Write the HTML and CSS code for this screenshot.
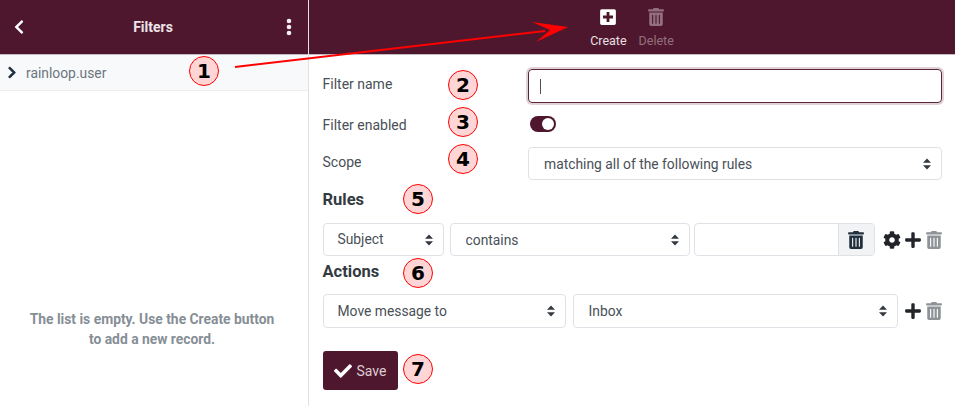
FILE: index.html
```html
<!DOCTYPE html>
<html lang="en">
<head>
<meta charset="utf-8">
<title>Filters</title>
<link rel="stylesheet" href="styles.css">
</head>
<body>
<div class="app">
  <aside class="sidebar">
    <header class="side-head">
      <svg class="back" viewBox="0 0 320 512"><path d="M34.52 239.03L228.87 44.69c9.37-9.37 24.57-9.37 33.94 0l22.67 22.67c9.36 9.36 9.37 24.52.04 33.9L131.49 256l154.02 154.75c9.34 9.38 9.32 24.54-.04 33.9l-22.67 22.67c-9.37 9.37-24.57 9.37-33.94 0L34.52 272.97c-9.37-9.37-9.37-24.57 0-33.94z"/></svg>
      <span class="side-title">Filters</span>
      <svg class="dots" viewBox="0 0 6 18"><circle cx="3" cy="3" r="2.3"/><circle cx="3" cy="9" r="2.3"/><circle cx="3" cy="15" r="2.3"/></svg>
    </header>
    <div class="account">
      <svg class="chev" viewBox="0 0 320 512"><path d="M285.476 272.971L91.132 467.314c-9.373 9.373-24.569 9.373-33.941 0l-22.667-22.667c-9.357-9.357-9.375-24.522-.04-33.901L188.505 256 34.484 101.255c-9.335-9.379-9.317-24.544.04-33.901l22.667-22.667c9.373-9.373 24.569-9.373 33.941 0L285.475 239.03c9.373 9.372 9.373 24.568.001 33.941z"/></svg>
      <span>rainloop.user</span>
    </div>
    <p class="empty">The list is empty. Use the Create button<br>to add a new record.</p>
  </aside>
  <main class="main">
    <header class="toolbar">
      <div class="tool">
        <svg class="tool-icon" viewBox="0 0 448 512"><path d="M400 32H48C21.5 32 0 53.5 0 80v352c0 26.5 21.5 48 48 48h352c26.5 0 48-21.5 48-48V80c0-26.5-21.5-48-48-48zm-32 252c0 6.6-5.4 12-12 12h-92v92c0 6.6-5.4 12-12 12h-56c-6.6 0-12-5.4-12-12v-92H92c-6.6 0-12-5.4-12-12v-56c0-6.6 5.4-12 12-12h92v-92c0-6.6 5.4-12 12-12h56c6.6 0 12 5.4 12 12v92h92c6.6 0 12 5.4 12 12v56z"/></svg>
        <span>Create</span>
      </div>
      <div class="tool tool-off">
        <svg class="tool-icon" viewBox="0 0 448 512"><path d="M32 464a48 48 0 0 0 48 48h288a48 48 0 0 0 48-48V128H32zm272-256a16 16 0 0 1 32 0v224a16 16 0 0 1-32 0zm-96 0a16 16 0 0 1 32 0v224a16 16 0 0 1-32 0zm-96 0a16 16 0 0 1 32 0v224a16 16 0 0 1-32 0zM432 32H312l-9.4-18.7A24 24 0 0 0 281.1 0H166.8a23.72 23.72 0 0 0-21.4 13.3L136 32H16A16 16 0 0 0 0 48v32a16 16 0 0 0 16 16h416a16 16 0 0 0 16-16V48a16 16 0 0 0-16-16z"/></svg>
        <span>Delete</span>
      </div>
    </header>
    <form class="form">
      <div class="row row-name">
        <label class="label">Filter name</label>
        <div class="fake-input"><i class="caret"></i></div>
      </div>
      <div class="row row-toggle">
        <label class="label">Filter enabled</label>
        <span class="toggle"><i class="knob"></i></span>
      </div>
      <div class="row row-scope">
        <label class="label">Scope</label>
        <select class="select"><option>matching all of the following rules</option></select>
      </div>
      <h3 class="heading heading-rules">Rules</h3>
      <div class="line line-rule">
        <select class="select sel-subject"><option>Subject</option></select>
        <select class="select sel-contains"><option>contains</option></select>
        <div class="group">
          <span class="group-input"></span>
          <span class="group-btn">
            <svg class="ico-trash dark" viewBox="0 0 448 512"><path d="M32 464a48 48 0 0 0 48 48h288a48 48 0 0 0 48-48V128H32zm272-256a16 16 0 0 1 32 0v224a16 16 0 0 1-32 0zm-96 0a16 16 0 0 1 32 0v224a16 16 0 0 1-32 0zm-96 0a16 16 0 0 1 32 0v224a16 16 0 0 1-32 0zM432 32H312l-9.4-18.7A24 24 0 0 0 281.1 0H166.8a23.72 23.72 0 0 0-21.4 13.3L136 32H16A16 16 0 0 0 0 48v32a16 16 0 0 0 16 16h416a16 16 0 0 0 16-16V48a16 16 0 0 0-16-16z"/></svg>
          </span>
        </div>
        <div class="icons">
          <svg class="ico-cog" viewBox="0 0 512 512"><path d="M487.4 315.7l-42.6-24.6c4.3-23.2 4.3-47 0-70.2l42.6-24.6c4.9-2.8 7.1-8.6 5.5-14-11.1-35.6-30-67.8-54.7-94.6-3.8-4.1-10-5.1-14.8-2.3L380.8 110c-17.9-15.4-38.5-27.3-60.8-35.1V25.8c0-5.6-3.9-10.5-9.4-11.7-36.7-8.2-74.3-7.8-109.2 0-5.5 1.2-9.4 6.1-9.4 11.7V75c-22.2 7.9-42.8 19.8-60.8 35.1L88.7 85.5c-4.9-2.8-11-1.9-14.8 2.3-24.7 26.7-43.6 58.9-54.7 94.6-1.7 5.4.6 11.2 5.5 14L67.3 221c-4.3 23.2-4.3 47 0 70.2l-42.6 24.6c-4.9 2.8-7.1 8.6-5.5 14 11.1 35.6 30 67.8 54.7 94.6 3.8 4.1 10 5.1 14.8 2.3l42.6-24.6c17.9 15.4 38.5 27.3 60.8 35.1v49.2c0 5.6 3.9 10.5 9.4 11.7 36.7 8.2 74.3 7.8 109.2 0 5.5-1.2 9.4-6.1 9.4-11.7v-49.2c22.2-7.9 42.8-19.8 60.8-35.1l42.6 24.6c4.9 2.8 11 1.9 14.8-2.3 24.7-26.7 43.6-58.9 54.7-94.6 1.5-5.5-.7-11.3-5.6-14.1zM256 336c-44.1 0-80-35.9-80-80s35.9-80 80-80 80 35.9 80 80-35.9 80-80 80z"/></svg>
          <svg class="ico-plus" viewBox="0 0 448 512"><path d="M416 208H272V64c0-17.67-14.33-32-32-32h-32c-17.67 0-32 14.33-32 32v144H32c-17.67 0-32 14.33-32 32v32c0 17.67 14.33 32 32 32h144v144c0 17.67 14.33 32 32 32h32c17.67 0 32-14.33 32-32V304h144c17.67 0 32-14.33 32-32v-32c0-17.67-14.33-32-32-32z"/></svg>
          <svg class="ico-trash muted" viewBox="0 0 448 512"><path d="M32 464a48 48 0 0 0 48 48h288a48 48 0 0 0 48-48V128H32zm272-256a16 16 0 0 1 32 0v224a16 16 0 0 1-32 0zm-96 0a16 16 0 0 1 32 0v224a16 16 0 0 1-32 0zm-96 0a16 16 0 0 1 32 0v224a16 16 0 0 1-32 0zM432 32H312l-9.4-18.7A24 24 0 0 0 281.1 0H166.8a23.72 23.72 0 0 0-21.4 13.3L136 32H16A16 16 0 0 0 0 48v32a16 16 0 0 0 16 16h416a16 16 0 0 0 16-16V48a16 16 0 0 0-16-16z"/></svg>
        </div>
      </div>
      <h3 class="heading heading-actions">Actions</h3>
      <div class="line line-action">
        <select class="select sel-move"><option>Move message to</option></select>
        <select class="select sel-inbox"><option>Inbox</option></select>
        <div class="icons">
          <svg class="ico-plus" viewBox="0 0 448 512"><path d="M416 208H272V64c0-17.67-14.33-32-32-32h-32c-17.67 0-32 14.33-32 32v144H32c-17.67 0-32 14.33-32 32v32c0 17.67 14.33 32 32 32h144v144c0 17.67 14.33 32 32 32h32c17.67 0 32-14.33 32-32V304h144c17.67 0 32-14.33 32-32v-32c0-17.67-14.33-32-32-32z"/></svg>
          <svg class="ico-trash muted" viewBox="0 0 448 512"><path d="M32 464a48 48 0 0 0 48 48h288a48 48 0 0 0 48-48V128H32zm272-256a16 16 0 0 1 32 0v224a16 16 0 0 1-32 0zm-96 0a16 16 0 0 1 32 0v224a16 16 0 0 1-32 0zm-96 0a16 16 0 0 1 32 0v224a16 16 0 0 1-32 0zM432 32H312l-9.4-18.7A24 24 0 0 0 281.1 0H166.8a23.72 23.72 0 0 0-21.4 13.3L136 32H16A16 16 0 0 0 0 48v32a16 16 0 0 0 16 16h416a16 16 0 0 0 16-16V48a16 16 0 0 0-16-16z"/></svg>
        </div>
      </div>
      <button type="button" class="save">
        <svg class="ico-check" viewBox="0 0 512 512"><path d="M173.898 439.404l-166.4-166.4c-9.997-9.997-9.997-26.206 0-36.204l36.203-36.204c9.997-9.998 26.207-9.998 36.204 0L192 312.69 432.095 72.596c9.997-9.997 26.207-9.997 36.204 0l36.203 36.204c9.997 9.997 9.997 26.206 0 36.204l-294.4 294.401c-9.998 9.997-26.207 9.997-36.204-.001z"/></svg>
        <span>Save</span>
      </button>
    </form>
  </main>
</div>
<svg class="arrow" viewBox="0 0 955 406"><line x1="235" y1="67" x2="545" y2="31"/><polygon points="568,27 532,22 550,30 536,42"/></svg>
<span class="callout c1">1</span>
<span class="callout c2">2</span>
<span class="callout c3">3</span>
<span class="callout c4">4</span>
<span class="callout c5">5</span>
<span class="callout c6">6</span>
<span class="callout c7">7</span>
</body>
</html>
```

FILE: styles.css
```css
* { box-sizing: border-box; }
html, body { margin: 0; height: 100%; }
body {
  position: relative;
  width: 955px;
  height: 406px;
  overflow: hidden;
  background: #fff;
  font-family: Roboto, "Liberation Sans", sans-serif;
  font-size: 14px;
  color: #495057;
}
.app { display: flex; height: 406px; }

/* sidebar */
.sidebar {
  width: 309px;
  flex: none;
  display: flex;
  flex-direction: column;
  border-right: 1px solid #dee2e6;
}
.side-head {
  height: 55px;
  flex: none;
  display: flex;
  align-items: center;
  justify-content: space-between;
  padding: 0 16px 1px 14px;
  background: #4f172e;
  border-bottom: 1px solid #c5bac0;
  color: #fff;
}
.back { width: 10px; height: 16px; fill: #fff; }
.side-title { font-weight: 700; font-size: 14px; color: #ede4e8; margin-left: -4px; }
.dots { width: 6px; height: 18px; fill: #f3eef0; }
.account {
  height: 36px;
  flex: none;
  display: flex;
  align-items: center;
  gap: 9px;
  padding: 0 0 0 7px;
  background: #f8f9fa;
  border-bottom: 1px solid #eceef0;
  color: #6c757d;
  font-size: 13.85px;
}
.chev { width: 10px; height: 13px; fill: #212f45; stroke: #212f45; stroke-width: 30; }
.empty {
  margin: 218px 0 0;
  padding-right: 4px;
  text-align: center;
  font-weight: 700;
  font-size: 13.85px;
  line-height: 20px;
  color: #868e96;
}

/* main */
.main { flex: 1; display: flex; flex-direction: column; min-width: 0; }
.toolbar {
  height: 55px;
  flex: none;
  display: flex;
  justify-content: center;
  gap: 12px;
  padding: 8px 0 0 0;
  background: #4f172e;
  border-bottom: 1px solid #c5bac0;
  font-size: 12.5px;
}
.tool {
  display: flex;
  flex-direction: column;
  align-items: center;
  gap: 7px;
  color: #eae0e4;
}
.tool-icon { width: 16px; height: 18px; fill: #fff; }
.tool-off { color: #93707e; }
.tool-off .tool-icon { fill: #93707e; }

.form { padding: 14px 13px 0 13.5px; }
.row { display: flex; align-items: center; }
.label { width: 205.5px; flex: none; color: #495057; font-size: 14px; }
.row-name { height: 34px; }
.row-name .label { padding-bottom: 4px; }
.row-toggle { height: 16px; margin-top: 13px; }
.row-toggle .label { padding-top: 1px; }
.row-scope { height: 33px; margin-top: 15px; }
.row-scope .label { padding-bottom: 3px; }
.fake-input {
  flex: 1;
  height: 34px;
  display: flex;
  align-items: center;
  padding-left: 11px;
  border: 1px solid #5a2439;
  border-radius: 4px;
  box-shadow: 0 0 0 2px #e0d2d8;
}
.caret { width: 1px; height: 15px; background: #495057; }
.toggle {
  width: 26px;
  height: 16px;
  margin-left: 2px;
  display: flex;
  justify-content: flex-end;
  align-items: center;
  padding-right: 2px;
  border-radius: 8px;
  background: #4f172e;
}
.knob { width: 12px; height: 12px; border-radius: 50%; background: #fff; }

.select {
  appearance: none;
  -webkit-appearance: none;
  height: 33px;
  flex: 1;
  min-width: 0;
  padding: 0 24px 0 15px;
  border: 1px solid #dee2e6;
  border-radius: 4px;
  color: #495057;
  font-family: inherit;
  font-size: 13.85px;
  background: #fff url("data:image/svg+xml,%3Csvg xmlns='http://www.w3.org/2000/svg' width='8' height='12'%3E%3Cpath d='M4 0.5L8 4.8H0zM4 11.5L0 7.2H8z' fill='%23343a40'/%3E%3C/svg%3E") no-repeat right 10px center;
}
.heading { margin: 0; font-size: 16.5px; line-height: 18px; font-weight: 700; color: #343a40; }
.heading-rules { margin-top: 11px; }
.heading-actions { margin-top: 7px; }
.line { display: flex; height: 33px; }
.line-rule { margin-top: 14px; }
.line-action { margin-top: 13px; height: 34px; }
.line-action .select { height: 34px; }
.sel-subject { flex: 0 0 121px; padding-left: 14px; padding-bottom: 2px; }
.sel-contains { flex: 0 0 240px; margin-left: 6px; padding-left: 15px; padding-top: 1px; }
.sel-move { flex: 0 0 243px; padding-left: 14px; padding-bottom: 1px; }
.sel-inbox { flex: 0 0 325px; margin-left: 7px; padding-left: 15px; padding-bottom: 1px; }
.group {
  flex: 0 0 181px;
  margin-left: 4px;
  display: flex;
  border: 1px solid #dee2e6;
  border-radius: 4px;
  overflow: hidden;
}
.group-input { flex: 1; }
.group-btn {
  width: 36px;
  display: flex;
  align-items: center;
  justify-content: center;
  background: #f1f3f5;
  border-left: 1px solid #dee2e6;
}
.icons { flex: 1; display: flex; justify-content: flex-end; align-items: center; gap: 5px; }
.ico-trash { width: 16px; height: 18px; }
.ico-trash.dark { fill: #212f3c; }
.ico-trash.muted { fill: #8f9296; }
.ico-cog { width: 18px; height: 18px; fill: #212529; margin-right: -1px; }
.ico-plus { width: 16px; height: 18px; fill: #212529; }

.save {
  display: flex;
  align-items: center;
  gap: 5px;
  width: 75px;
  height: 39px;
  margin-top: 23px;
  padding: 0 0 0 11px;
  border: 0;
  border-radius: 3px;
  background: #4f172e;
  color: #dcccd3;
  font-family: inherit;
  font-size: 14px;
}
.ico-check { width: 18px; height: 18px; fill: #fff; }

/* annotations drawn over the screenshot */
.arrow { position: absolute; left: 0; top: 0; width: 955px; height: 406px; pointer-events: none; }
.arrow line { stroke: #f00; stroke-width: 2; }
.arrow polygon { fill: #f00; }
.callout {
  position: absolute;
  width: 30px;
  height: 30px;
  border: 1px solid #f00;
  border-radius: 50%;
  background: #ffd5d5;
  color: #000;
  display: flex;
  align-items: center;
  justify-content: center;
  font-family: "DejaVu Sans", sans-serif;
  font-weight: 700;
  font-size: 20px;
}
.c1 { left: 189px; top: 56px; }
.c2 { left: 448px; top: 70px; }
.c3 { left: 448px; top: 107px; }
.c4 { left: 448px; top: 144px; }
.c5 { left: 403px; top: 184px; }
.c6 { left: 403px; top: 258px; }
.c7 { left: 403px; top: 354px; }
```
